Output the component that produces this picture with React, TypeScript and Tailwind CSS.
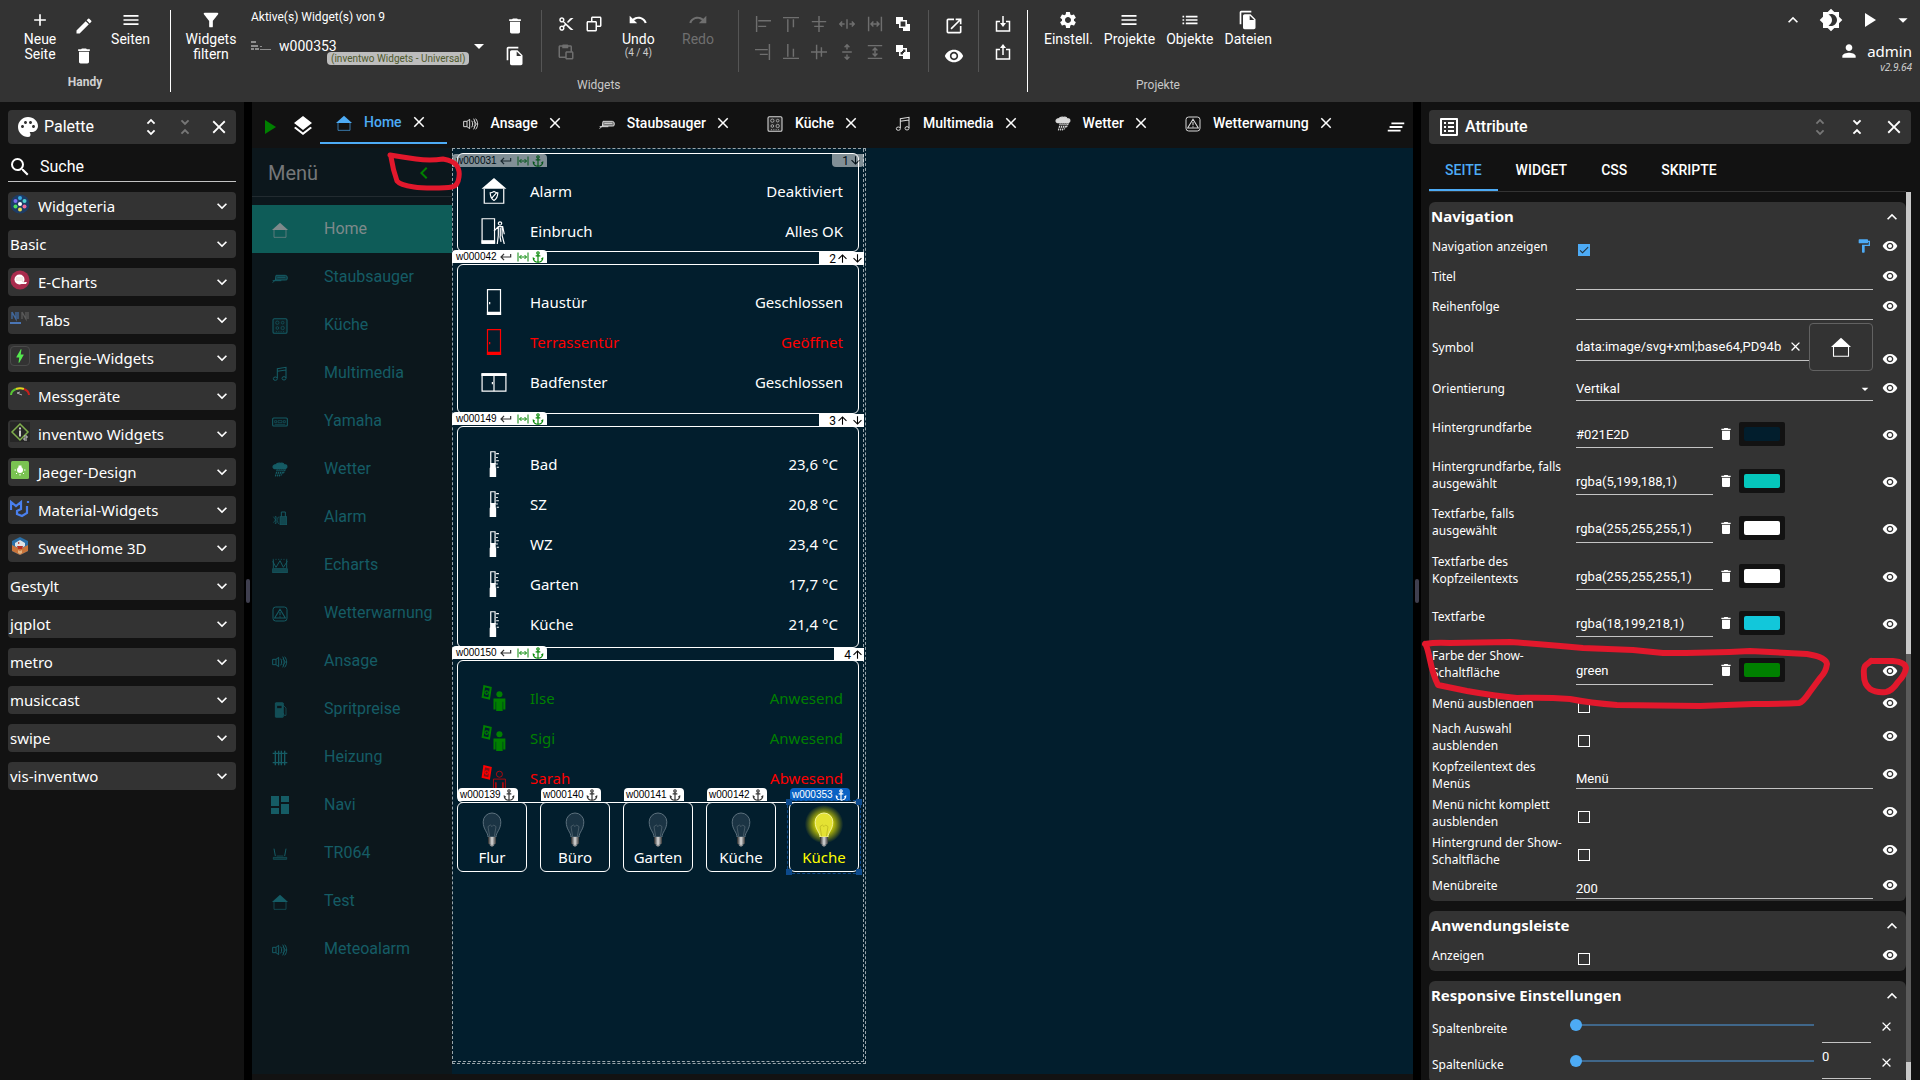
import React from "react";
import {
  MdAdd, MdEdit, MdDelete, MdMenu, MdFilterAlt, MdFileCopy, MdUndo, MdRedo, MdOpenInNew, MdVisibility,
  MdSettings, MdList, MdExpandLess, MdExpandMore, MdBrightness4, MdPlayArrow, MdArrowDropDown, MdPerson,
  MdPalette, MdUnfoldMore, MdUnfoldLess, MdClose, MdSearch, MdLayers, MdListAlt, MdFormatPaint, MdAnchor,
  MdClearAll, MdChevronLeft, MdKeyboardReturn, MdArrowUpward, MdArrowDownward, MdDashboard, MdCheck, MdBolt,
} from "react-icons/md";
import { BiCut, BiCopy, BiPaste } from "react-icons/bi";

const ROBOTO = "font-['Roboto',sans-serif]";
const OPEN = "font-['Noto_Sans','Open_Sans',sans-serif]";

/* ---------- small drawings ---------- */

function Draw({ children, className = "size-5", box = "0 0 24 24", w = 1.3 }: { children: React.ReactNode; className?: string; box?: string; w?: number }) {
  return (
    <svg viewBox={box} className={className} fill="none" stroke="currentColor" strokeWidth={w} aria-hidden="true">
      {children}
    </svg>
  );
}

const glyphs: Record<string, React.ReactNode> = {
  house: (<><path d="M12 1 0 12h24z" fill="currentColor" stroke="none" /><path d="M3 12v11h18V12" /></>),
  speaker: (<><path d="M1 8h5v8H1zM6 8l4-3v14l-4-3M13 7c2 3 2 7 0 10M16 4c3 5 3 11 0 16M19 4c4 5 4 11 0 16M16 8c5 2 5 6 0 8" strokeWidth="1.500" /></>),
  vacuum: (<><path d="M6 8h14q3 0 3 4t-3 3H5z" fill="currentColor" fillOpacity=".5" strokeWidth="1.500" /><path d="M1 16h13M1 19l6-6M8 11h12" strokeWidth="1.500" /></>),
  stove: (<><rect x="1.500" y="1" width="21" height="22" rx="2" fill="currentColor" fillOpacity=".12" strokeWidth="1.600" /><circle cx="8" cy="7" r="2.500" /><circle cx="16" cy="7" r="2" /><circle cx="8" cy="15" r="2" /><circle cx="16" cy="15" r="2.500" /><path d="M6 20.500h12" strokeDasharray="1.500 2" /></>),
  note: (<><path d="M8 18V4l13-2v16M8 8l13-2" strokeWidth="1.600" /><ellipse cx="5" cy="19" rx="3" ry="2.500" strokeWidth="1.500" /><ellipse cx="18" cy="18.500" rx="3" ry="2.500" strokeWidth="1.500" /></>),
  receiver: (<><rect x="1" y="6" width="22" height="12" rx="1.500" strokeWidth="1.600" /><path d="M4 10h3v3H4zM9 10h6v3H9zM17 10h3v3h-3zM4 15.500h16" /></>),
  rain: (<><path d="M4 10q-3-1-2-4 1-2 4-2 2-3 7-2 4-1 5 2 5 0 4 4-1 2-4 2z" fill="currentColor" strokeWidth="2" /><path d="m8 11-3 11M11 11 8 22M14 11l-3 11M17 11l-3 9M20 11l-3 6" strokeWidth="1.800" strokeDasharray="3 1" /></>),
  alarm: (<><rect x="12" y="10" width="10" height="12" fill="currentColor" fillOpacity=".7" /><path d="M14 10V3h6v7" strokeWidth="1.500" /><path d="m2 10 6 8-3 3V9l3 3-6 7M10 10c-2 3-2 8 0 11" /></>),
  chart: (<><path d="M1 2h22" strokeDasharray="2 2" /><path d="m1 5 5 9 6-10 5 10 6-9M2 3v12M22 3v12" strokeWidth="1.400" /><rect x="1" y="16" width="22" height="6" fill="currentColor" fillOpacity=".7" /></>),
  warn: (<><rect x="1.500" y="1.500" width="21" height="21" rx="4" strokeWidth="1.500" /><path d="m12 5-8 13h16zM12 9v5M12 15.500v1.500" strokeWidth="1.600" /></>),
  fuel: (<><rect x="5" y="1" width="12" height="22" rx="1" fill="currentColor" fillOpacity=".8" /><path d="M7 5h8v5H7z" fill="#0c171c" /><path d="M17 5l4 4v11q-3 2-4-3" /></>),
  radiator: (<><path d="M5 1v22M10 1v22M14 1v22M19 1v22" strokeWidth="2" /><path d="M1 5h22M1 19h22" strokeWidth="2" /></>),
  router: (<><path d="M5 15 3 4M19 15l2-11" strokeWidth="1.500" /><path d="M2 17h20v3H2z" fill="currentColor" fillOpacity=".4" /><path d="M7 15h10" /></>),
  door: (<><path d="M6 .5h12v23H6z" /><path d="M6 21.500h12v2H6z" fill="currentColor" /><path d="M8 12v2" /></>),
  window: (<><path d="M1 4.500h22v16H1z" /><path d="M1 4.500h22v1.500H1z" fill="currentColor" /><path d="M12 5v15.500M10.500 12v2" /></>),
  alarmhouse: (<><path d="M12 0 .5 10h23z" fill="currentColor" stroke="none" /><path d="M3 10v13.300h18V10" /><path d="M12 12.500q2 1.200 3.500 1.200 0 5-3.500 7-3.500-2-3.500-7 1.500 0 3.500-1.200zM9.500 19l5-5.500" /></>),
  burglar: (<><path d="M1 .7h11.500v22.600H1z" /><path d="M1 21h11.500v2.300H1z" fill="currentColor" /><path d="M17.500 3.500a1.500 1.500 0 1 0 .1 0M16 8l-4 4M16 8v8l-1 8M19.500 8v8l2 8M15.500 8h4.500l1.500 7M17.800 9v8M17.500 17l1 5" /></>),
  thermo: (<><path d="M9 12V.7h4V12" /><path d="M8.400 11h5.200v4l.4 1v8H8v-8l.4-1z" fill="currentColor" stroke="none" /><path d="M14 2.500h2.500M14 6h1.500M14 9h2.500M14 12h1.500M14.500 15h2" /></>),
  present: (<><path d="m3 1 6 1.500-1.500 10-6-1.500z" strokeWidth="1.800" /><circle cx="5.200" cy="7" r="1.600" /><circle cx="17" cy="8.500" r="2.800" fill="currentColor" stroke="none" /><path d="M11.500 12.500h11v10h-2v-7h-.5V24h-6v-8.500h-.5v7h-2z" fill="currentColor" stroke="none" /></>),
  absent: (<><path d="m3 1 6 1.500-1.500 10-6-1.500z" strokeWidth="1.800" fill="currentColor" fillOpacity=".5" /><circle cx="5.200" cy="7" r="1.600" /><g strokeWidth=".6"><circle cx="17" cy="8.500" r="2.800" /><path d="M11.500 13h11v10h-2v-7M20 16v8h-6v-8M13.500 16v7h-2V13" /></g></>),
};

function Glyph({ name, className, w }: { name: string; className?: string; w?: number }) {
  return <Draw className={className} w={w}>{glyphs[name]}</Draw>;
}

function Bulb({ on }: { on?: boolean }) {
  return (
    <svg viewBox="0 0 60 60" className="-my-2 h-12 w-12" aria-hidden="true">
      <defs>
        <radialGradient id="glow"><stop offset="45%" stopColor="#d8d800" stopOpacity=".9" /><stop offset="100%" stopColor="#d8d800" stopOpacity="0" /></radialGradient>
        <linearGradient id="cap"><stop offset="0" stopColor="#222" /><stop offset=".5" stopColor="#ddd" /><stop offset="1" stopColor="#333" /></linearGradient>
      </defs>
      {on && <circle cx="30" cy="24" r="24" fill="url(#glow)" />}
      <path d="M25 40C25 34 19 31 19 21a11 11 0 0 1 22 0c0 10-6 13-6 19z" fill={on ? "#e4e233" : "#1b3444"} stroke={on ? "#f4f3a0" : "#5f7380"} strokeWidth="1.200" />
      <path d="m27 39-2-12 3-2 2 2 2-2 3 2-2 12" fill="none" stroke={on ? "#bdb820" : "#51636f"} />
      <path d="M25 40h10v8q-5 4-10 0z" fill="url(#cap)" />
      <path d="M27 50h6l-2 2h-2z" fill="#999" />
    </svg>
  );
}

/* ---------- generic pieces ---------- */

function IconButton({ label, children, className = "" }: { label: string; children: React.ReactNode; className?: string }) {
  return (
    <button type="button" aria-label={label} className={`flex shrink-0 items-center justify-center ${className}`}>
      {children}
    </button>
  );
}

function ToolButton({ icon, label, className = "" }: { icon: React.ReactNode; label: string; className?: string }) {
  return (
    <button type="button" className={`flex flex-col items-center text-sm leading-[15px] ${className}`}>
      <span className="mb-0.5 flex h-5 items-center">{icon}</span>
      <span>{label}</span>
    </button>
  );
}

const alignTop = [
  "M2 0v20M4 6h16M4 13h10", "M0 2h20M6 4v16M13 4v10", "M10 0v20M1 7h18M4 13h12",
  "M10 4v12M1 10h6M13 10h6M4 7l-3 3 3 3M16 7l3 3-3 3", "M2 1v18M18 1v18M5 10h10M8 7l-3 3 3 3M12 7l3 3-3 3",
];
const alignBottom = [
  "M18 0v20M0 7h16M6 13h10", "M0 18h20M6 0v16M13 6v10", "M0 10h20M7 1v18M13 4v12",
  "M4 10h12M10 1v6M10 13v6M7 4l3-3 3 3M7 16l3 3 3-3", "M1 2h18M1 18h18M10 5v10M7 8l3-3 3 3M7 12l3 3 3-3",
];

function AlignIcon({ d }: { d: string }) {
  return (
    <IconButton label="Ausrichten" className="size-4 text-[#6f6f6f]">
      <Draw box="0 0 20 20" className="size-4" w={1.8}><path d={d} /></Draw>
    </IconButton>
  );
}

function Toolbar() {
  return (
    <header className={`flex h-[102px] shrink-0 bg-[#333] text-white ${ROBOTO}`}>
      <section className="flex w-[170px] flex-col pt-2.5">
        <div className="flex h-[62px] justify-between pr-5 pl-6">
          <ToolButton className="w-8" icon={<MdAdd size={20} />} label="Neue Seite" />
          <div className="flex flex-col justify-between pt-1.5 pb-1.5">
            <IconButton label="Seite umbenennen"><MdEdit size={20} /></IconButton>
            <IconButton label="Seite löschen"><MdDelete size={20} /></IconButton>
          </div>
          <ToolButton icon={<MdMenu size={20} />} label="Seiten" />
        </div>
        <p className="text-center text-xs leading-5 font-bold text-[#d0d0d0]">Handy</p>
      </section>
      <div className="my-2.5 w-px bg-white" />
      <section className="flex w-[370px] gap-4 pt-2.5 pl-4">
        <ToolButton className="w-12" icon={<MdFilterAlt size={22} />} label="Widgets filtern" />
        <div className="relative w-[238px]">
          <label htmlFor="active" className="block text-xs leading-[14px]">Aktive(s) Widget(s) von 9</label>
          <div className="mt-3 flex h-5 items-center">
            <svg viewBox="0 0 20 12" className="h-3 w-5" aria-hidden="true"><path d="M0 1h5v2H0zM0 5h7v2H0zM0 8h3v2H0zM4 8h4v2H4zM9 9h11v1H9zM9 6h2v1H9z" fill="#8d8d8d" /></svg>
            <select id="active" className="ml-2 w-[120px] appearance-none bg-transparent text-sm text-white" defaultValue="w000353"><option>w000353</option></select>
            <MdArrowDropDown size={24} className="ml-auto -mr-0.5" />
          </div>
          <span className="absolute top-[42px] left-[76px] h-[13px] rounded-sm bg-[#bdbdbd] px-1 text-[10px] leading-[13px] whitespace-nowrap text-[#4f5a2c]">(inventwo Widgets - Universal)</span>
        </div>
        <div className="flex h-[62px] flex-col justify-between pt-1.5 pb-1.5">
          <IconButton label="Widget löschen"><MdDelete size={20} /></IconButton>
          <IconButton label="Widget duplizieren"><MdFileCopy size={20} /></IconButton>
        </div>
      </section>
      <section className="relative flex w-[486px] pt-2.5">
        <div className="h-[62px] w-px bg-[#555]" />
        <div className="flex w-[70px] gap-2.5 pt-[5px] pl-[15px]">
          <div className="flex flex-col gap-2.5">
            <IconButton label="Ausschneiden"><BiCut size={18} /></IconButton>
            <IconButton label="Einfügen" className="text-[#6f6f6f]"><BiPaste size={18} /></IconButton>
          </div>
          <IconButton label="Kopieren" className="self-start"><BiCopy size={18} /></IconButton>
        </div>
        <div className="flex w-[126px] justify-between pr-6 pl-2.5">
          <button type="button" className="flex flex-col items-center text-sm leading-[15px]">
            <span className="mb-0.5 flex h-5 items-center"><MdUndo size={20} /></span>Undo
            <span className="text-[10px] leading-3 text-[#ccc]">(4 / 4)</span>
          </button>
          <ToolButton className="text-[#6f6f6f]" icon={<MdRedo size={20} />} label="Redo" />
        </div>
        <div className="h-[62px] w-px bg-[#555]" />
        <div className="flex w-[189px] flex-col gap-3 pt-1.5 pl-4">
          <div className="flex gap-3">
            {alignTop.map((d) => <AlignIcon key={d} d={d} />)}
            <IconButton label="Nach vorne" className="size-4">
              <svg viewBox="0 0 16 16" className="size-4" aria-hidden="true"><path d="M1 1h7v7H1zM8 8h7v7H8z" fill="#fff" /><path d="M4.800 4.800h6.400v6.400H4.800z" fill="#333" stroke="#fff" strokeWidth="1.600" /></svg>
            </IconButton>
          </div>
          <div className="flex gap-3">
            {alignBottom.map((d) => <AlignIcon key={d} d={d} />)}
            <IconButton label="Nach hinten" className="size-4">
              <svg viewBox="0 0 16 16" className="size-4" aria-hidden="true"><path d="M4.800 4.800h6.400v6.400H4.800z" fill="#333" stroke="#fff" strokeWidth="1.600" /><path d="M1 1h7v6H7v1H1zM8 9h1V8h6v7H8z" fill="#fff" /></svg>
            </IconButton>
          </div>
        </div>
        <div className="h-[62px] w-px bg-[#555]" />
        <div className="flex h-[62px] w-[49px] flex-col items-center justify-between py-1.5">
          <IconButton label="In neuem Fenster öffnen"><MdOpenInNew size={20} /></IconButton>
          <IconButton label="Anzeigen"><MdVisibility size={20} /></IconButton>
        </div>
        <div className="h-[62px] w-px bg-[#555]" />
        <div className="flex w-[47px] flex-col items-center gap-3 pt-1.5">
          <IconButton label="Importieren"><Draw box="0 0 16 16" className="size-4" w={1.5}><path d="M5 5.500H1.500v9.500h13V5.500H11M8 0v9" /><path d="M5 7h6l-3 4z" fill="currentColor" stroke="none" /></Draw></IconButton>
          <IconButton label="Exportieren"><Draw box="0 0 16 16" className="size-4" w={1.5}><path d="M5 5.500H1.500v9.500h13V5.500H11M8 3v8" /><path d="M5 4h6L8 0z" fill="currentColor" stroke="none" /></Draw></IconButton>
        </div>
        <p className="absolute top-[75px] left-9 text-xs leading-5 text-[#c8c8c8]">Widgets</p>
      </section>
      <div className="my-2.5 w-px bg-white" />
      <section className="w-[260px] pt-2.5">
        <div className="flex h-[65px] gap-[11px] pl-4">
          <ToolButton icon={<MdSettings size={20} />} label="Einstell." />
          <ToolButton icon={<MdMenu size={20} />} label="Projekte" />
          <ToolButton icon={<MdList size={20} />} label="Objekte" />
          <ToolButton icon={<MdFileCopy size={20} />} label="Dateien" />
        </div>
        <p className="text-center text-xs leading-5 text-[#c8c8c8]">Projekte</p>
      </section>
      <section className="ml-auto flex flex-col items-end pt-2 pr-2">
        <div className="flex items-center">
          <IconButton label="Leiste einklappen" className="mr-4"><MdExpandLess size={20} /></IconButton>
          <IconButton label="Farbschema" className="mr-3.5"><MdBrightness4 size={24} /></IconButton>
          <IconButton label="Starten" className="mr-[11px]"><MdPlayArrow size={24} /></IconButton>
          <IconButton label="Mehr" className="-mr-0.5"><MdArrowDropDown size={22} /></IconButton>
        </div>
        <div className="mt-[9px] flex items-center gap-2">
          <MdPerson size={20} />
          <span className={`text-[15px] leading-5 ${OPEN}`}>admin</span>
        </div>
        <span className={`text-[10px] leading-3 italic text-[#ccc] ${OPEN}`}>v2.9.64</span>
      </section>
    </header>
  );
}

/* ---------- palette ---------- */

const paletteIcons: Record<string, React.ReactNode> = {
  widgeteria: (<svg viewBox="0 0 20 20" className="size-5"><circle cx="10" cy="10" r="9.500" fill="#1d3c66" /><circle cx="10" cy="4" r="2" fill="#37a8e0" /><circle cx="5.500" cy="7" r="2" fill="#7d6cf0" /><circle cx="14.500" cy="7" r="2" fill="#4fd0d0" /><circle cx="10" cy="10" r="2" fill="#fff" /><circle cx="5.500" cy="12.500" r="2" fill="#4be060" /><circle cx="14.500" cy="12.500" r="2" fill="#f06a9a" /><circle cx="10" cy="15.500" r="2" fill="#e7d94e" /></svg>),
  echarts: (<svg viewBox="0 0 20 20" className="size-5"><circle cx="10" cy="10" r="9.500" fill="#a92c4d" /><circle cx="9.500" cy="9.500" r="5" fill="#fff" /><path d="M13 12h4l-1 2h-6z" fill="#fff" /><path d="M6 8h7M6 10h7M12 11l3 2" stroke="#dba" strokeWidth=".6" /></svg>),
  tabs: (<svg viewBox="0 0 20 20" className="size-5"><path d="M2 4v7M2 4l4 7V4M8 4v7" stroke="#41689c" strokeWidth="1.400" fill="none" /><path d="M12 4v7M12 4l4 7V4M18 4v7" stroke="#5a5a5a" strokeWidth="1.300" fill="none" /><path d="M0 14h11v2H0z" fill="#4b76b5" /></svg>),
  energie: (<span className="flex size-5 items-center justify-center rounded-sm border border-[#4a4a4a] text-[#55e84f]"><MdBolt size={20} /></span>),
  mess: (<svg viewBox="0 0 20 20" className="size-5" fill="none" strokeWidth="2"><path d="M1 11a9 7 0 0 1 5-6" stroke="#58c433" /><path d="M6 5a9 7 0 0 1 8 0" stroke="#e3d51d" /><path d="M14 5a9 7 0 0 1 5 6" stroke="#c9201c" /><path d="m12 11-5-2 3-1" stroke="#aaa" strokeWidth="1" /></svg>),
  inventwo: (<svg viewBox="0 0 20 20" className="size-5"><path d="M0 0h20v20H0z" fill="#262626" /><path d="m10 2 8 8-8 8-8-8z" fill="none" stroke="#7fae4c" strokeWidth="1.500" /><path d="M10 5.500v2M10 8.500v6" stroke="#ccc" strokeWidth="2" /><path d="M14 14h3v2h-3v2h3" fill="none" stroke="#ccc" /></svg>),
  jaeger: (<svg viewBox="0 0 20 20" className="size-5"><rect x="1" y="1" width="18" height="18" rx="1.500" fill="#7ac352" /><circle cx="10" cy="10" r="3" fill="#fff" /><path d="M8.500 5.500h3V9h-3z" fill="#fff" /><path d="M4.500 10h1.500M14 10h1.500M6 14l1-1M14 14l-1-1M10 14v1.500" stroke="#fff" /></svg>),
  material: (<svg viewBox="0 0 20 20" className="size-5" fill="none" stroke="#4a80ee" strokeWidth="2.200"><path d="M1 12V4l5 4 5-4v7l-4 2v3l5 2 5-3V8" /><path d="M18 3v2" /></svg>),
  sweet: (<svg viewBox="0 0 20 20" className="size-5"><path d="m10 1 8 4v10l-8 4-8-4V5z" fill="#2a6fa8" /><path d="m2 9 8 4 8-4v6l-8 4-8-4z" fill="#c9743a" /><path d="m5 7 5-3 5 3v3l-5 3-5-3z" fill="#dfe3e6" /><path d="M7 10h6l-1 3H8zM8 6l2 1-2 1z" fill="#b92d22" /><path d="m8 14 2 1 2-1v3l-2 1-2-1z" fill="#e3b27f" /></svg>),
};

const palette: [string, string?][] = [
  ["Widgeteria", "widgeteria"], ["Basic"], ["E-Charts", "echarts"], ["Tabs", "tabs"], ["Energie-Widgets", "energie"],
  ["Messgeräte", "mess"], ["inventwo Widgets", "inventwo"], ["Jaeger-Design", "jaeger"], ["Material-Widgets", "material"],
  ["SweetHome 3D", "sweet"], ["Gestylt"], ["jqplot"], ["metro"], ["musiccast"], ["swipe"], ["vis-inventwo"],
];

function Palette() {
  return (
    <aside className="w-[244px] shrink-0 bg-[#121212] p-2 text-white">
      <div className={`flex h-[34px] items-center rounded-sm bg-[#333] pr-1.5 pl-2 text-base ${ROBOTO}`}>
        <MdPalette size={24} />
        <h2 className="ml-1">Palette</h2>
        <IconButton label="Alle aufklappen" className="ml-auto"><MdUnfoldMore size={22} /></IconButton>
        <IconButton label="Alle zuklappen" className="ml-3 text-[#777]"><MdUnfoldLess size={22} /></IconButton>
        <IconButton label="Palette schließen" className="ml-3"><MdClose size={22} /></IconButton>
      </div>
      <div className="mt-2 flex h-[30px] items-center border-b border-[#c4c4c4]">
        <MdSearch size={24} />
        <input aria-label="Suche" placeholder="Suche" className={`ml-2 w-40 bg-transparent text-base text-white placeholder:text-white ${ROBOTO}`} />
      </div>
      <ul className="mt-2.5 flex flex-col gap-2.5">
        {palette.map(([name, icon]) => (
          <li key={name}>
            <button type="button" className={`flex h-7 w-full items-center rounded-sm bg-[#333] pr-1 pl-0.5 text-[15px] ${OPEN}`}>
              {icon && <span className="-mt-1 mr-2">{paletteIcons[icon]}</span>}
              {name}
              <MdExpandMore size={20} className="ml-auto" />
            </button>
          </li>
        ))}
      </ul>
    </aside>
  );
}

function Splitter() {
  return (
    <div className="flex w-2 shrink-0 items-center justify-center bg-black">
      <span className="h-6 w-1 rounded-sm bg-[#3f3f4f]" />
    </div>
  );
}

/* ---------- page view ---------- */

const tabs: [string, string][] = [
  ["Home", "house"], ["Ansage", "speaker"], ["Staubsauger", "vacuum"], ["Küche", "stove"],
  ["Multimedia", "note"], ["Wetter", "rain"], ["Wetterwarnung", "warn"],
];

const menu: [string, string][] = [
  ["Home", "house"], ["Staubsauger", "vacuum"], ["Küche", "stove"], ["Multimedia", "note"], ["Yamaha", "receiver"],
  ["Wetter", "rain"], ["Alarm", "alarm"], ["Echarts", "chart"], ["Wetterwarnung", "warn"], ["Ansage", "speaker"],
  ["Spritpreise", "fuel"], ["Heizung", "radiator"], ["Navi", "dash"], ["TR064", "router"], ["Test", "house"], ["Meteoalarm", "speaker"],
];

interface Row { icon: string; name: string; value: string; color?: string }
interface CardData { id: string; pos: number; rows: Row[]; box: string; inset?: boolean }

const cards: CardData[] = [
  { id: "w000031", pos: 1, box: "h-[99px]", rows: [
    { icon: "alarmhouse", name: "Alarm", value: "Deaktiviert" }, { icon: "burglar", name: "Einbruch", value: "Alles OK" }] },
  { id: "w000042", pos: 2, box: "h-[150px]", rows: [
    { icon: "door", name: "Haustür", value: "Geschlossen" }, { icon: "door", name: "Terrassentür", value: "Geöffnet", color: "text-[#f00]" },
    { icon: "window", name: "Badfenster", value: "Geschlossen" }] },
  { id: "w000149", pos: 3, inset: true, box: "h-[222px]", rows: [
    { icon: "thermo", name: "Bad", value: "23,6 °C" }, { icon: "thermo", name: "SZ", value: "20,8 °C" }, { icon: "thermo", name: "WZ", value: "23,4 °C" },
    { icon: "thermo", name: "Garten", value: "17,7 °C" }, { icon: "thermo", name: "Küche", value: "21,4 °C" }] },
  { id: "w000150", pos: 4, box: "h-[143px]", rows: [
    { icon: "present", name: "Ilse", value: "Anwesend", color: "text-[#008000]" }, { icon: "present", name: "Sigi", value: "Anwesend", color: "text-[#008000]" },
    { icon: "absent", name: "Sarah", value: "Abwesend", color: "text-[#f00]" }] },
];

const bulbs = ["Flur", "Büro", "Garten", "Küche", "Küche"];
const bulbIds = ["w000139", "w000140", "w000141", "w000142", "w000353"];

function Card({ card }: { card: CardData }) {
  const first = card.pos === 1;
  return (
    <article className={`relative rounded-md border border-white pt-[17px] ${card.box}`}>
      {card.rows.map((r) => (
        <div key={r.name} className={`flex h-10 items-center pl-[23px] text-[15px] ${card.inset ? "pr-5" : "pr-[15px]"} ${r.color ?? "text-white"}`}>
          <Glyph name={r.icon} className="size-[26px]" w={1.1} />
          <span className="ml-[23px]">{r.name}</span>
          <span className="ml-auto">{r.value}</span>
        </div>
      ))}
      <div className={`absolute -left-1.5 flex h-[13px] w-[95px] items-center rounded-t-sm bg-white pl-1 font-['Liberation_Sans',Arial,sans-serif] text-[10px] text-black ${first ? "top-0 opacity-50" : "-top-[15px]"}`}>
        {card.id}
        <MdKeyboardReturn size={14} className="ml-0.5 text-[#333]" />
        <Draw className="ml-1 size-3 text-[#0a8a0a]" w={2}><path d="M2 3v18M22 3v18M5 12h14M9 8l-4 4 4 4M15 8l4 4-4 4" /></Draw>
        <MdAnchor size={14} className="ml-0.5 text-[#0a8a0a]" />
      </div>
      <div className={`absolute -right-1.5 flex h-[13px] items-center justify-end bg-white pl-2.5 text-xs text-black ${ROBOTO} ${first ? "top-0 rounded-b-sm pr-0.5 opacity-50" : "-top-[13px]"}`}>
        {card.pos}
        {!first && <MdArrowUpward size={13} />}
        {card.pos !== 4 && <MdArrowDownward size={13} className={first ? "" : "ml-0.5"} />}
      </div>
    </article>
  );
}

function Tile({ id, name, on }: { id: string; name: string; on: boolean }) {
  return (
    <div className={`relative flex h-[70px] w-[70px] flex-col items-center rounded-md border border-white bg-[#021e2d] pt-2.5 text-[15px] ${on ? "text-[#ff0]" : "text-white"}`}>
      <Bulb on={on} />
      <span className="mt-0.5 leading-5">{name}</span>
      <span className={`absolute -top-[15px] left-0 flex h-[13px] items-center rounded-t-sm px-0.5 font-['Liberation_Sans',Arial,sans-serif] text-[10px] ${on ? "bg-[#0a62c4] text-white" : "bg-white text-black"}`}>
        {id}<MdAnchor size={14} className={on ? "ml-px text-white" : "ml-px text-[#333]"} />
      </span>
      {on && (
        <span className="pointer-events-none absolute -inset-[3px] border border-dashed border-[#0d4a8c]">
          <i className="absolute -top-0.5 -left-0.5 size-1.5 bg-[#0d4a8c]" /><i className="absolute -top-0.5 -right-0.5 size-1.5 bg-[#0d4a8c]" />
          <i className="absolute -bottom-0.5 -left-0.5 size-1.5 bg-[#0d4a8c]" /><i className="absolute -right-0.5 -bottom-0.5 size-1.5 bg-[#0d4a8c]" />
        </span>
      )}
    </div>
  );
}

function PageView() {
  return (
    <main className={`relative flex min-w-0 flex-1 flex-col bg-[#121212] ${ROBOTO}`}>
      <div className="flex h-[46px] shrink-0 items-start text-white">
        <IconButton label="Vorschau" className="mt-[13px] ml-[5px] text-[#008000]"><MdPlayArrow size={24} /></IconButton>
        <IconButton label="Ansichten" className="mt-3 ml-2 w-7"><MdLayers size={24} /></IconButton>
        <nav className="ml-[3px] flex">
          {tabs.map(([name, icon], i) => (
            <div key={name} className={`flex h-[42px] items-center pr-[19px] pl-4 text-sm font-medium ${i === 0 ? "border-b-2 border-[#4dabf5] text-[#4dabf5]" : "text-white"}`}>
              <Glyph name={icon} w={1} className={i === 0 ? "mt-0.5 size-4" : "mt-0.5 size-4 text-[#d8d8d8]"} />
              <button type="button" className="ml-3">{name}</button>
              <IconButton label={`${name} schließen`} className="ml-2 text-white"><MdClose size={18} /></IconButton>
            </div>
          ))}
        </nav>
        <IconButton label="Alle Seiten" className="mt-3.5 mr-1.5 ml-auto"><MdClearAll size={22} /></IconButton>
      </div>
      <div className="flex min-h-0 flex-1 bg-[#021e2d]">
        <nav className="w-[200px] shrink-0 bg-[#0c171c]">
          <div className="flex h-[49px] items-center justify-between border-b border-[#222b30] px-4 pt-0.5">
            <h1 className="text-xl text-[#757779]">Menü</h1>
            <IconButton label="Menü einklappen"><MdChevronLeft size={24} className="text-[#008000]" /></IconButton>
          </div>
          <ul className="pt-2">
            {menu.map(([name, icon], i) => (
              <li key={name}>
                <a href={`#${name}`} className={`flex h-12 items-center text-base ${i === 0 ? "bg-[#0e5c58] text-[#7f8a8b]" : "text-[#155c65]"}`}>
                  <span className="flex w-14 justify-center">
                    {icon === "dash" ? <MdDashboard size={24} /> : <Glyph name={icon} w={1} className="mt-0.5 size-4" />}
                  </span>
                  <span className="ml-4">{name}</span>
                </a>
              </li>
            ))}
          </ul>
        </nav>
        <div className="mb-2.5 w-[414px] border border-dashed border-[#9aa5ab] pr-px pb-px">
          <div className={`h-full border-r border-b border-dashed border-[#9aa5ab] pt-1 pr-1 pl-1 ${OPEN}`}>
            <div className="flex flex-col gap-3">
              {cards.map((c) => <Card key={c.id} card={c} />)}
            </div>
            <div className="relative -mt-px flex justify-between">
              {bulbs.map((b, i) => <Tile key={bulbIds[i]} id={bulbIds[i]} name={b} on={i === 4} />)}
            </div>
          </div>
        </div>
      </div>
      <div className="h-1.5 shrink-0" />
      <svg className="pointer-events-none absolute top-[46px] left-[132px]" width="84" height="48" viewBox="384 148 84 48" fill="none" stroke="#e2182c" strokeWidth="5" strokeLinejoin="round" strokeLinecap="round" aria-hidden="true">
        <path d="M390 155Q402 157 416 159T443 159Q454 161 457 166T459 177Q458 186 452 187T433 188T414 187Q400 185 397 181Q393 170 391 157" />
      </svg>
    </main>
  );
}

/* ---------- attributes ---------- */

const fieldText = `bg-transparent text-[13px] text-white ${ROBOTO}`;

function Eye({ className = "" }: { className?: string }) {
  return <IconButton label="Sichtbar" className={`mr-2 ml-auto size-4 ${className}`}><MdVisibility size={16} /></IconButton>;
}

function Label({ id, children }: { id: string; children: React.ReactNode }) {
  return <label htmlFor={id} className="w-[144px] shrink-0 text-xs leading-[17px]">{children}</label>;
}

function Check({ id, checked = false }: { id: string; checked?: boolean }) {
  return (
    <span className="relative mt-2 ml-0.5 flex size-3">
      <input id={id} type="checkbox" defaultChecked={checked} className="size-3 appearance-none border border-white checked:border-[#4dabf5] checked:bg-[#4dabf5]" />
      {checked && <MdCheck size={12} className="pointer-events-none absolute top-0 left-0 text-[#22303c]" />}
    </span>
  );
}

function CheckRow({ id, label, tall, checked, roller }: { id: string; label: string; tall?: boolean; checked?: boolean; roller?: boolean }) {
  return (
    <div className={`flex items-center pl-[3px] ${tall ? "h-[38px]" : "h-[30px]"}`}>
      <Label id={id}>{label}</Label>
      <Check id={id} checked={checked} />
      <span className="ml-auto flex items-center gap-2.5">
        {roller && <MdFormatPaint size={16} className="text-[#4dabf5]" />}
        <Eye className={tall ? "mb-0.5" : ""} />
      </span>
    </div>
  );
}

function TextRow({ id, label, value, tall }: { id: string; label: string; value: string; tall?: boolean }) {
  return (
    <div className={`flex items-center pl-[3px] ${tall ? "h-[38px]" : "h-[30px]"}`}>
      <Label id={id}>{label}</Label>
      <input id={id} defaultValue={value} className={`h-5 min-w-0 flex-1 border-b border-[#c4c4c4] ${fieldText} ${tall ? "mt-2" : "mt-2"}`} />
      <span className="w-[33px]"><Eye className={tall ? "mb-0.5" : ""} /></span>
    </div>
  );
}

const colors: [string, string, string][] = [
  ["Hintergrundfarbe", "#021E2D", "bg-[#021e2d]"],
  ["Hintergrundfarbe, falls ausgewählt", "rgba(5,199,188,1)", "bg-[#05c7bc]"],
  ["Textfarbe, falls ausgewählt", "rgba(255,255,255,1)", "bg-white"],
  ["Textfarbe des Kopfzeilentexts", "rgba(255,255,255,1)", "bg-white"],
  ["Textfarbe", "rgba(18,199,218,1)", "bg-[#12c7da]"],
  ["Farbe der Show-Schaltfläche", "green", "bg-[#008000]"],
];

function ColorRow({ label, value, swatch }: { label: string; value: string; swatch: string }) {
  const id = `c-${label}`;
  return (
    <div className="flex items-center pl-[3px]">
      <Label id={id}>{label}</Label>
      <input id={id} defaultValue={value} className={`mt-3.5 h-[27px] w-[137px] border-b border-[#c4c4c4] ${fieldText}`} />
      <IconButton label="Farbe löschen" className="mt-3 ml-[5px] w-4"><MdDelete size={16} /></IconButton>
      <button type="button" aria-label="Farbe wählen" className="mt-3 ml-[5px] h-6 rounded-xs bg-[#121212] p-[5px]">
        <span className={`block h-3.5 w-9 rounded-xs ${swatch}`} />
      </button>
      <Eye className="mt-3.5" />
    </div>
  );
}

function Section({ title, children, className = "" }: { title: string; children: React.ReactNode; className?: string }) {
  return (
    <section className={`rounded-md bg-[#333] pb-px ${className}`}>
      <div className="flex h-[29px] items-center justify-between pr-1 pl-0.5">
        <h3 className="text-[15px] font-bold">{title}</h3>
        <IconButton label={`${title} zuklappen`}><MdExpandLess size={20} /></IconButton>
      </div>
      {children}
    </section>
  );
}

function SliderRow({ id, label, value }: { id: string; label: string; value: string }) {
  return (
    <div className="flex h-9 items-center pl-[3px]">
      <Label id={id}>{label}</Label>
      <input id={id} type="range" min="0" max="100" defaultValue="0"
        className="mb-1.5 -ml-1.5 h-3 min-w-0 flex-1 appearance-none bg-[linear-gradient(#40678a,#40678a)] bg-[length:100%_2px] bg-center bg-no-repeat [&::-webkit-slider-thumb]:size-3 [&::-webkit-slider-thumb]:appearance-none [&::-webkit-slider-thumb]:rounded-full [&::-webkit-slider-thumb]:bg-[#4dabf5]" />
      <input aria-label={`${label} Wert`} defaultValue={value} className={`mt-1.5 mb-1 ml-2 h-[27px] w-[49px] border-b border-[#c4c4c4] pb-4 ${fieldText}`} />
      <IconButton label={`${label} löschen`} className="mr-3 mb-1 ml-2"><MdClose size={15} /></IconButton>
    </div>
  );
}

function Attributes() {
  return (
    <aside className="relative flex w-[499px] shrink-0 flex-col bg-[#121212] pt-2 pr-[9px] pl-2 text-white">
      <div className={`flex h-[34px] shrink-0 items-center rounded-sm bg-[#333] pr-1.5 pl-2 text-base font-medium ${ROBOTO}`}>
        <MdListAlt size={24} />
        <h2 className="ml-1">Attribute</h2>
        <IconButton label="Alle aufklappen" className="ml-auto text-[#777]"><MdUnfoldMore size={22} /></IconButton>
        <IconButton label="Alle zuklappen" className="ml-[15px]"><MdUnfoldLess size={22} /></IconButton>
        <IconButton label="Attribute schließen" className="ml-[15px]"><MdClose size={22} /></IconButton>
      </div>
      <div className={`mr-[5px] flex h-12 shrink-0 gap-0.5 border-b border-[#333] text-sm font-medium ${ROBOTO}`}>
        <button type="button" className="border-b-2 border-[#4dabf5] px-4 pt-1.5 text-[#4dabf5]">SEITE</button>
        <button type="button" className="px-4 pt-1">WIDGET</button>
        <button type="button" className="px-4 pt-1">CSS</button>
        <button type="button" className="px-4 pt-1">SKRIPTE</button>
      </div>
      <div className="flex min-h-0 flex-1">
        <div className={`flex min-w-0 flex-1 flex-col gap-2.5 overflow-hidden pt-2.5 ${OPEN}`}>
          <Section title="Navigation">
            <CheckRow id="nav" label="Navigation anzeigen" checked roller />
            <TextRow id="titel" label="Titel" value="" />
            <TextRow id="folge" label="Reihenfolge" value="" />
            <div className="flex h-[52px] items-center pl-[3px]">
              <Label id="symbol">Symbol</Label>
              <div className="flex h-7 min-w-0 flex-1 items-center border-b border-[#c4c4c4]">
                <input id="symbol" defaultValue="data:image/svg+xml;base64,PD94b" className={`min-w-0 flex-1 ${fieldText}`} />
                <IconButton label="Symbol löschen" className="mr-1.5 ml-1"><MdClose size={15} /></IconButton>
              </div>
              <button type="button" aria-label="Symbol wählen" className="flex h-12 w-16 items-center justify-center rounded-sm border border-[#626262]">
                <Glyph name="house" className="size-5" />
              </button>
              <span className="w-[33px]"><Eye className="mt-6" /></span>
            </div>
            <div className="flex h-[30px] items-center pl-[3px]">
              <Label id="orient">Orientierung</Label>
              <div className="relative mt-0.5 flex h-6 min-w-0 flex-1 items-center border-b border-[#c4c4c4]">
                <select id="orient" defaultValue="Vertikal" className={`w-full appearance-none ${fieldText}`}><option>Vertikal</option></select>
                <MdArrowDropDown size={16} className="pointer-events-none absolute right-0" />
              </div>
              <span className="w-[33px]"><Eye /></span>
            </div>
            <div className="mt-px grid h-[284px] auto-rows-fr">
              {colors.map(([l, v, s]) => <ColorRow key={l} label={l} value={v} swatch={s} />)}
            </div>
            <CheckRow id="hide" label="Menü ausblenden" />
            <CheckRow id="hide2" label="Nach Auswahl ausblenden" tall />
            <TextRow id="kopf" label="Kopfzeilentext des Menüs" value="Menü" tall />
            <CheckRow id="part" label="Menü nicht komplett ausblenden" tall />
            <CheckRow id="bg" label="Hintergrund der Show-Schaltfläche" tall />
            <TextRow id="breite" label="Menübreite" value="200" />
          </Section>
          <Section title="Anwendungsleiste">
            <CheckRow id="bar" label="Anzeigen" />
          </Section>
          <Section title="Responsive Einstellungen" className="flex-1">
            <SliderRow id="sb" label="Spaltenbreite" value="" />
            <SliderRow id="sl" label="Spaltenlücke" value="0" />
          </Section>
        </div>
        <div className="flex w-[5px] shrink-0 flex-col bg-[#c9c9c9]">
          <span className="mt-[462px] h-[408px] shrink-0 bg-[#5a5a5a]" />
        </div>
      </div>
      <svg className="pointer-events-none absolute top-[532px] right-0" width="499" height="84" viewBox="1421 634 499 84" fill="none" stroke="#e2182c" strokeWidth="6" strokeLinejoin="round" strokeLinecap="round" aria-hidden="true">
        <path d="M1425 644Q1436 642 1450 643L1510 642Q1550 645 1583 648L1633 650L1663 653Q1710 653 1750 651L1807 654Q1826 657 1827 664Q1826 672 1820 678L1809 693Q1803 702 1799 703Q1780 704 1753 704L1700 706L1617 705Q1590 703 1570 699Q1545 697 1517 698Q1495 696 1467 691L1438 685Q1433 675 1430 660T1425 644" />
        <path d="M1871 661H1893Q1905 662 1906 668Q1905 675 1898 682Q1892 691 1886 692Q1876 693 1870 689Q1864 684 1864 676Q1863 667 1866 665L1871 661" />
      </svg>
    </aside>
  );
}

export default function App() {
  return (
    <div className="flex h-screen flex-col overflow-hidden bg-black">
      <Toolbar />
      <div className="flex min-h-0 flex-1">
        <Palette />
        <Splitter />
        <PageView />
        <Splitter />
        <Attributes />
      </div>
    </div>
  );
}
